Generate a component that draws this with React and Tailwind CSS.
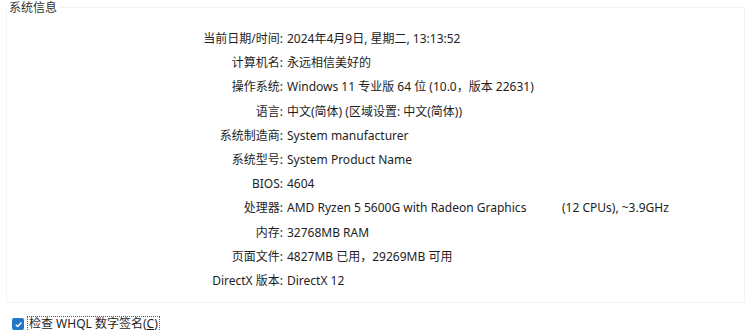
import React from 'react';

const rows = [
  ['当前日期/时间:', '2024年4月9日, 星期二, 13:13:52'],
  ['计算机名:', '永远相信美好的'],
  ['操作系统:', 'Windows 11 专业版 64 位 (10.0，版本 22631)'],
  ['语言:', '中文(简体) (区域设置: 中文(简体))'],
  ['系统制造商:', 'System manufacturer'],
  ['系统型号:', 'System Product Name'],
  ['BIOS:', '4604'],
  ['处理器:', 'AMD Ryzen 5 5600G with Radeon Graphics', '(12 CPUs), ~3.9GHz'],
  ['内存:', '32768MB RAM'],
  ['页面文件:', '4827MB 已用，29269MB 可用'],
  ['DirectX 版本:', 'DirectX 12'],
];

export default function App() {
  return (
    <div
      className="w-[747px] h-[331px] bg-white overflow-hidden relative text-[12px] text-[#1e1e1e]"
      style={{ fontFamily: '"Noto Sans", "Noto Sans CJK SC", sans-serif' }}
    >
      <div className="absolute left-[6px] right-[2px] top-[7px] h-[296px] border border-[#f3f3f3]" />
      <div className="absolute left-[7px] top-0 bg-white px-[2px] leading-[16px] text-[#333]">系统信息</div>

      <div className="pt-[27px] flex flex-col">
        {rows.map(([label, value, extra]) => (
          <div key={label} className="flex h-[24.2px] items-center leading-none">
            <div className="w-[283px] text-right shrink-0">{label}</div>
            <div className="pl-[4px] whitespace-nowrap">
              {extra ? (
                <>
                  <span className="inline-block w-[275px]">{value}</span>
                  <span>{extra}</span>
                </>
              ) : (
                value
              )}
            </div>
          </div>
        ))}
      </div>

      <div className="absolute left-[12px] top-[316px] flex items-center gap-[3px]">
        <div className="w-[12px] h-[12px] rounded-[2px] bg-[#2277c9] flex items-center justify-center">
          <svg width="9" height="9" viewBox="0 0 10 10">
            <path d="M2 5.2 L4.2 7.3 L8.2 2.8" fill="none" stroke="white" strokeWidth="1.5" />
          </svg>
        </div>
        <div className="border border-dotted border-[#555] px-[1px] leading-[14px]">
          检查 WHQL 数字签名(<span className="underline">C</span>)
        </div>
      </div>
    </div>
  );
}
